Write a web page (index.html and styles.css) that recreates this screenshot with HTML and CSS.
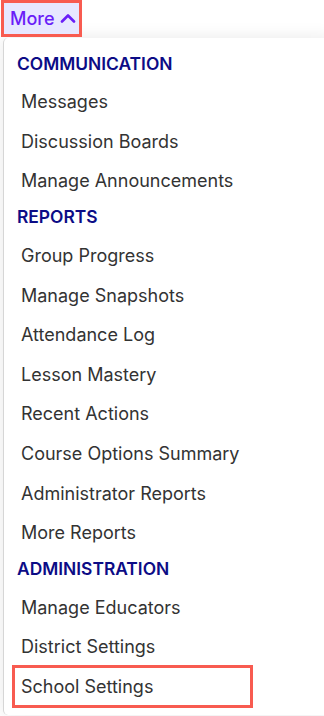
FILE: index.html
```html
<!DOCTYPE html>
<html lang="en">
<head>
<meta charset="utf-8">
<link rel="stylesheet" href="styles.css">
</head>
<body>
<div class="nav">
  <button class="more-btn">
    <span class="more-label">More</span>
    <svg class="chev" width="16" height="10" viewBox="0 0 16 10"><path d="M2 8.5 L8 2.5 L14 8.5" fill="none" stroke="currentColor" stroke-width="2.6" stroke-linecap="round" stroke-linejoin="round"/></svg>
  </button>
  <div class="menu">
    <div class="group-title">COMMUNICATION</div>
    <div class="item">Messages</div>
    <div class="item">Discussion Boards</div>
    <div class="item">Manage Announcements</div>
    <div class="group-title">REPORTS</div>
    <div class="item">Group Progress</div>
    <div class="item">Manage Snapshots</div>
    <div class="item">Attendance Log</div>
    <div class="item">Lesson Mastery</div>
    <div class="item">Recent Actions</div>
    <div class="item">Course Options Summary</div>
    <div class="item">Administrator Reports</div>
    <div class="item">More Reports</div>
    <div class="group-title">ADMINISTRATION</div>
    <div class="item">Manage Educators</div>
    <div class="item">District Settings</div>
    <div class="item highlight">School Settings</div>
  </div>
</div>
</body>
</html>
```

FILE: styles.css
```css
* { box-sizing: border-box; }
html, body { margin: 0; padding: 0; background: #ffffff; }
body {
  font-family: Inter, "Noto Sans", sans-serif;
  width: 324px;
  height: 716px;
  overflow: hidden;
}
.nav {
  display: flex;
  flex-direction: column;
  align-items: flex-start;
}
.more-btn {
  position: relative;
  z-index: 2;
  margin-left: 1px;
  width: 81px;
  height: 37px;
  border: 3px solid #f85b50;
  background: #e7e7ff;
  color: #6a1ef8;
  display: flex;
  align-items: center;
  gap: 5px;
  padding: 0 0 0 6px;
  font-family: Inter, "Noto Sans", sans-serif;
  font-size: 18px;
  font-weight: 500;
  cursor: pointer;
}
.more-label { line-height: 1; margin-top: 1px; }
.chev { display: block; margin-top: -2px; }
.menu {
  margin-top: 1px;
  margin-left: 3px;
  width: 330px;
  height: 677px;
  background: #ffffff;
  border-left: 1px solid #d6d6d6;
  border-top-left-radius: 5px;
  border-bottom-left-radius: 5px;
  box-shadow: 0 0 18px rgba(0, 0, 0, 0.09);
  padding-top: 9px;
  display: flex;
  flex-direction: column;
}
.group-title {
  height: 35px;
  flex: none;
  display: flex;
  align-items: center;
  padding-left: 13px;
  padding-bottom: 2.6px;
  color: #0c0c86;
  font-size: 17.4px;
  font-weight: 600;
}
.item {
  height: 39.6px;
  flex: none;
  display: flex;
  align-items: center;
  margin-left: 8px;
  padding-left: 9px;
  color: #333333;
  font-size: 18px;
  font-weight: 400;
}
.item.highlight {
  width: 241px;
  height: 43px;
  margin-top: -2px;
  border: 3px solid #f85b50;
  padding-left: 6px;
  padding-top: 1px;
}
```
